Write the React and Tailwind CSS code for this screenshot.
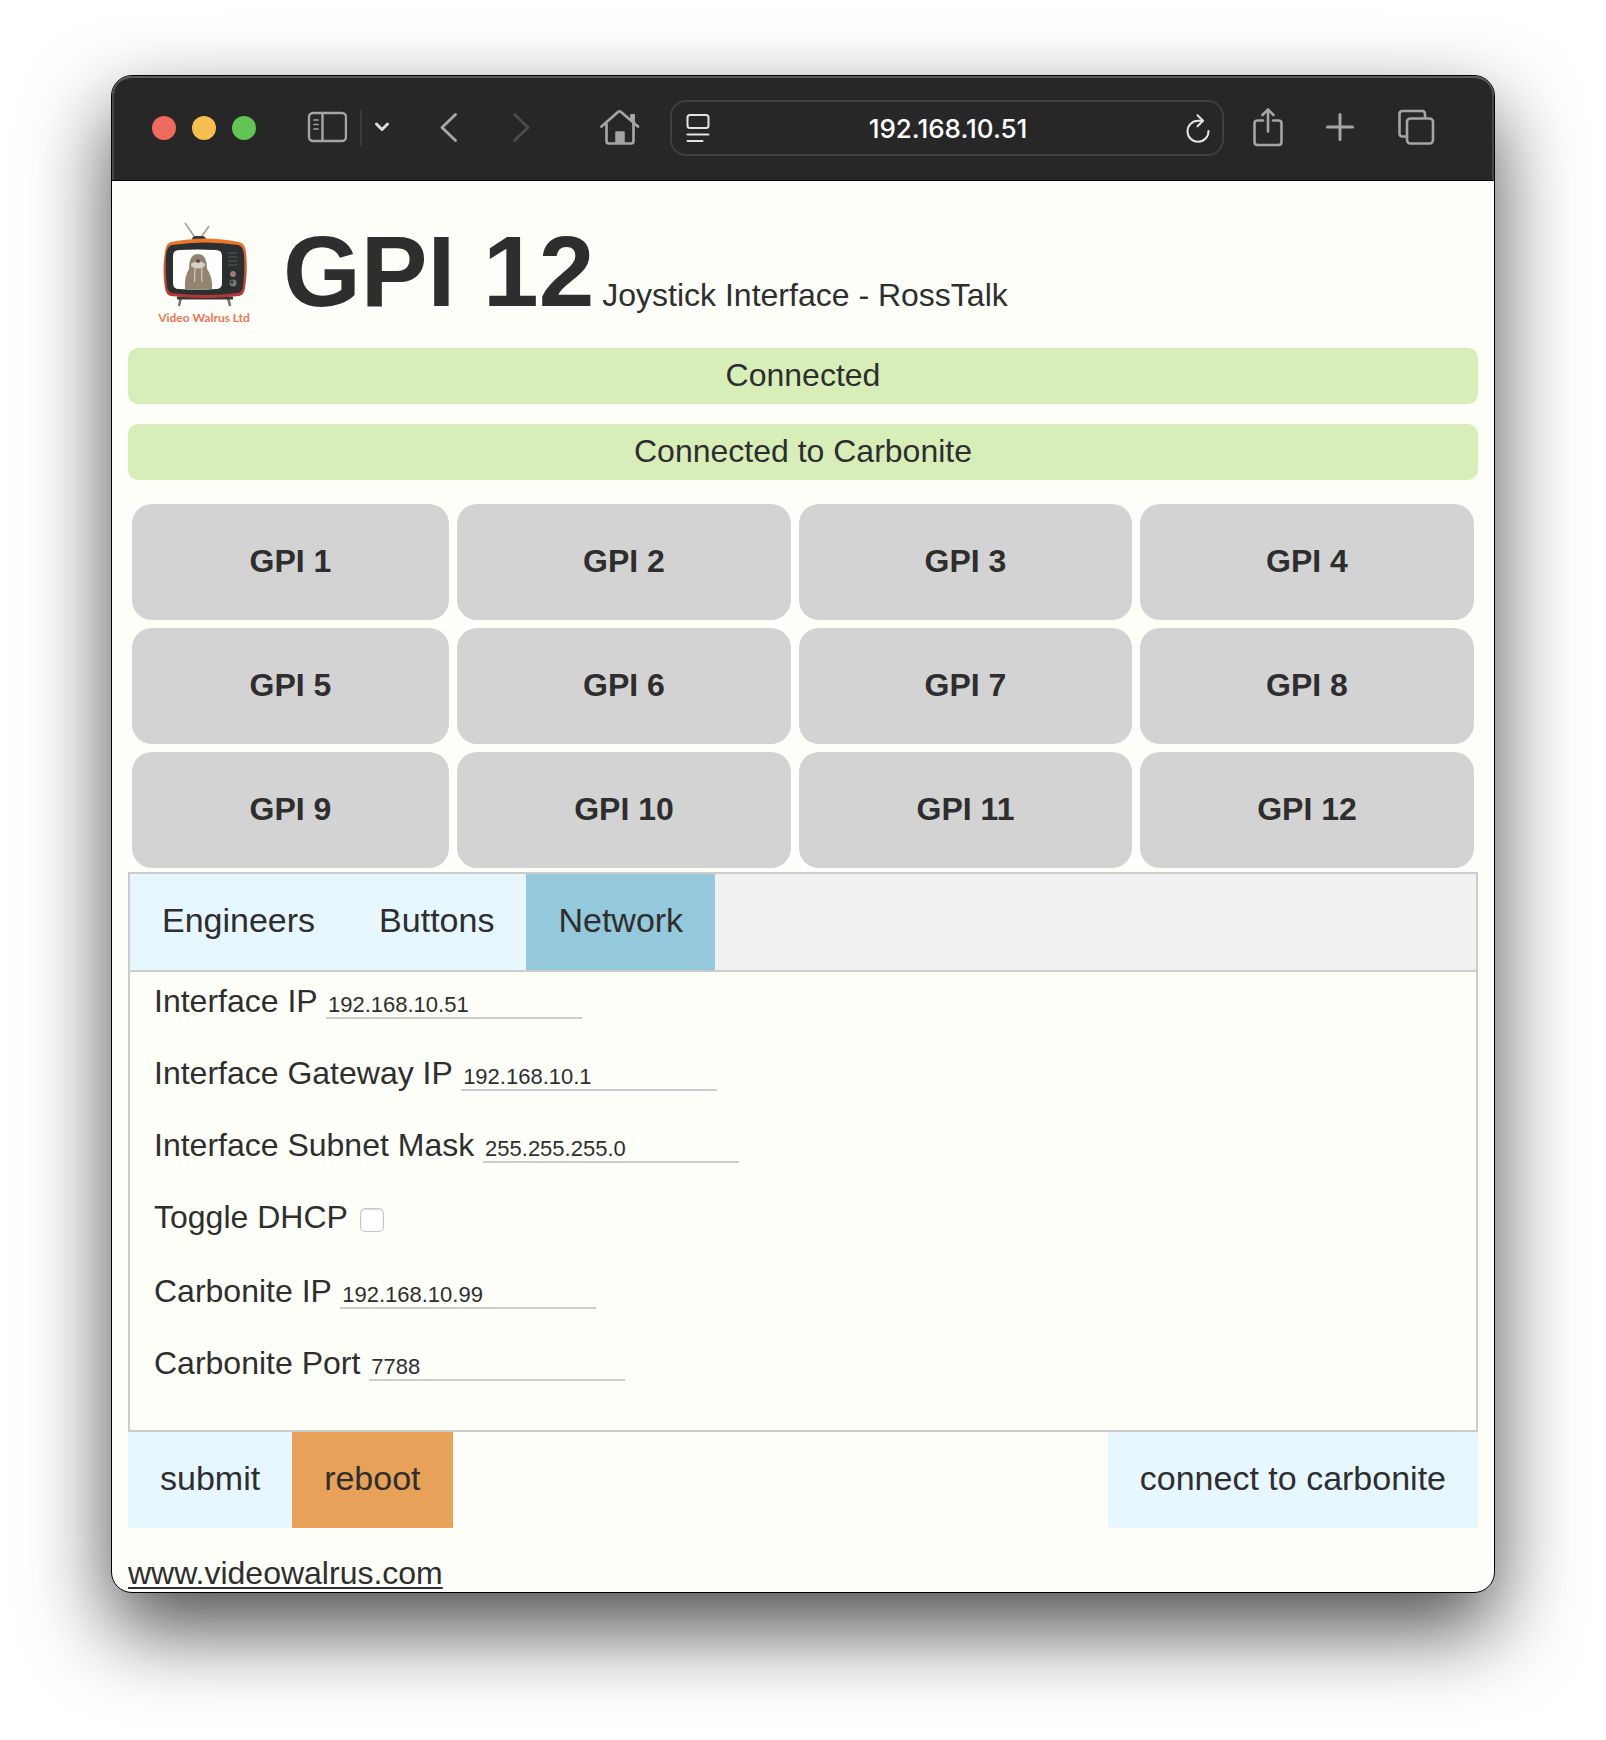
import React, { useState } from 'react';

const GPIS = Array.from({ length: 12 }, (_, i) => `GPI ${i + 1}`);
const TABS = ['Engineers', 'Buttons', 'Network'];

function Icon({ w, h, className = 'mb-0.5', children, stroke = 2 }) {
  return (
    <svg
      width={w}
      height={h}
      viewBox={`0 0 ${w} ${h}`}
      fill="none"
      stroke="currentColor"
      strokeWidth={stroke}
      strokeLinecap="round"
      strokeLinejoin="round"
      aria-hidden="true"
      className={`block shrink-0 ${className}`}
    >
      {children}
    </svg>
  );
}

function Toolbar() {
  return (
    <header className="flex h-[105px] items-center rounded-t-[20px] border-b border-black bg-[#272727] pr-[59px] pl-10 text-[#a5a5a5] shadow-[inset_0_2px_0_#5c5c5a,inset_2px_0_0_#484848,inset_-2px_0_0_#484848]">
      <div className="flex shrink-0 gap-4">
        <button aria-label="Close" className="size-6 rounded-full bg-[#ee6a5f]" />
        <button aria-label="Minimise" className="size-6 rounded-full bg-[#f5be4f]" />
        <button aria-label="Zoom" className="size-6 rounded-full bg-[#61c555]" />
      </div>
      <button aria-label="Sidebar" className="ml-[51px]">
        <Icon w={40} h={34} stroke={2.4}>
          <rect x="2" y="3" width="37" height="28" rx="4" />
          <path d="M15.500 3v28" />
          <path d="M7 10h4M7 14.500h4M7 19h4" strokeWidth="1.700" />
        </Icon>
      </button>
      <span className="ml-[13px] h-9 w-0.5 shrink-0 bg-[#3a3a3a]" />
      <button aria-label="Sidebar menu" className="ml-3 text-[#dcdcdc]">
        <Icon w={16} h={12} stroke={3}>
          <path d="M2.500 3l5.500 5.500L13.500 3" />
        </Icon>
      </button>
      <button aria-label="Back" className="ml-[49px]">
        <Icon w={20} h={32} stroke={3}>
          <path d="M16.500 3.500L3 16.500 16.500 29.500" />
        </Icon>
      </button>
      <button aria-label="Forward" className="ml-[52px] text-[#4b4b4b]">
        <Icon w={20} h={32} stroke={3}>
          <path d="M3.500 3.500L17 16.500 3.500 29.500" />
        </Icon>
      </button>
      <button aria-label="Home" className="ml-[69px]">
        <Icon w={40} h={38} stroke={2.7}>
          <path d="M1.500 18.500L18 4q1.500-1.200 3 0L38 18.500" />
          <path d="M6.500 16v17q0 2.500 2.500 2.500h22q2.500 0 2.500-2.500V16" />
          <path d="M31 6.500h3.500v9L31 12.500z" fill="currentColor" strokeWidth="1" />
          <path d="M16 24h8v11h-8z" fill="currentColor" strokeWidth="1.500" />
        </Icon>
      </button>
      <div className="ml-[30px] flex h-14 min-w-0 flex-1 items-center rounded-[16px] border-2 border-[#404040] px-3 text-white">
        <button aria-label="Reader" className="ml-0.5 text-[#e4e4e4]">
          <Icon w={24} h={30} className="">
            <rect x="1.500" y="2" width="21" height="13" rx="2.500" />
            <path d="M1.500 21.500h21M1.500 28h15" />
          </Icon>
        </button>
        <input
          aria-label="Address"
          defaultValue="192.168.10.51"
          className="min-w-0 flex-1 bg-transparent pt-0.5 text-center font-['Inter',sans-serif] text-[26px] leading-8 font-medium outline-none"
        />
        <button aria-label="Reload" className="text-[#e4e4e4]">
          <Icon w={24} h={30} className="">
            <path d="M17 7.800H12A10.500 10.500 0 1 0 22.500 18" />
            <path d="M11.500 2.300l5.500 5.500-5.500 5.500" />
          </Icon>
        </button>
      </div>
      <button aria-label="Share" className="ml-7">
        <Icon w={32} h={40} stroke={2.6}>
          <path d="M11 13.500H5.500q-3 0-3 3V35q0 3 3 3h21q3 0 3-3V16.500q0-3-3-3H21" />
          <path d="M16 24.500V3M10.500 8L16 2.500 21.500 8" />
        </Icon>
      </button>
      <button aria-label="New tab" className="ml-[42px]">
        <Icon w={28} h={28} stroke={3}>
          <path d="M14 1.500v25M1.500 14h25" />
        </Icon>
      </button>
      <button aria-label="Tab overview" className="ml-[43px]">
        <Icon w={38} h={38} stroke={2.6}>
          <path d="M9 28.500H5.500q-3 0-3-3V6q0-3 3-3H25q3 0 3 3v3.500" />
          <rect x="10" y="10.500" width="26" height="25" rx="3.500" />
        </Icon>
      </button>
    </header>
  );
}

function Logo() {
  return (
    <svg width="100" height="104" viewBox="0 0 100 104" role="img" aria-label="Video Walrus Ltd" className="block shrink-0">
      <defs>
        <linearGradient id="shell" x1="0" y1="0" x2="0" y2="1">
          <stop offset="0" stopColor="#ee7a2c" />
          <stop offset="0.500" stopColor="#c9553b" />
          <stop offset="1" stopColor="#b0343a" />
        </linearGradient>
      </defs>
      <path d="M29 2l9 13M53 5l-7 10" stroke="#9a9a98" strokeWidth="1.500" fill="none" />
      <path d="M36 19q0-4 4-4h6q4 0 4 4z" fill="#34393a" />
      <path d="M25 76l-2 9M72 76l2 9" stroke="#77706c" strokeWidth="2.500" />
      <path d="M21 77h56" stroke="#3c3536" strokeWidth="3" />
      <path d="M15 21Q50 14 83 21q6 1 7 10 2 18-1 36-1 7-6 8-34 4-68 0-5-1-6-8-3-18 0-36 1-9 6-10z" fill="url(#shell)" />
      <path d="M16 24q33-5 66 0 5 1 6 9 1 16-1 32-1 6-5 7-33 4-66 0-4-1-5-7-2-17-1-32 1-8 6-9z" fill="#2a2f30" />
      <path d="M23 29q18-1 37 0 6 0 6 6v27q0 6-6 6-19 1-37 0-6 0-6-6V35q0-6 6-6z" fill="#fff" />
      <path d="M29 68q-1-12 4-20 0-15 9-15t9 15q6 8 5 20z" fill="#94836f" />
      <ellipse cx="42" cy="44" rx="7" ry="3.500" fill="#d8d0c8" />
      <circle cx="42" cy="40" r="2" fill="#5b5048" />
      <path d="M39 46l-.500 15M45.500 46l.500 15" stroke="#cfc6bc" strokeWidth="1.300" />
      <path d="M72 32h9M72 36h9M72 40h9M72 44h9" stroke="#4c4c4b" strokeWidth="1.500" />
      <circle cx="77" cy="53" r="3" fill="#a07a6e" />
      <circle cx="77" cy="62" r="3.500" fill="#7b7975" />
      <circle cx="76" cy="61" r="1.500" fill="#2a2f30" />
      <text x="48" y="101" textAnchor="middle" fontSize="12" fill="#ee7355" fontFamily="Lato, sans-serif" fontWeight="700">
        Video Walrus Ltd
      </text>
    </svg>
  );
}

function Field({ id, label, value }) {
  return (
    <div className="h-[72px]">
      <label htmlFor={id}>{label}</label>{' '}
      <input
        id={id}
        defaultValue={value}
        className="h-[25px] w-64 border-b-2 border-[#cccccc] bg-transparent px-0.5 text-[22px] leading-none outline-none"
      />
    </div>
  );
}

export default function App() {
  const [tab, setTab] = useState('Network');
  return (
    <div className="overflow-hidden bg-white px-[111px] pt-[75px] pb-[147px] font-['Liberation_Sans',Arial,sans-serif] text-[32px] leading-9 text-[#2e2e2e]">
      <div className="rounded-[21px] border border-black bg-[#fefff9] shadow-[0_36px_84px_rgba(0,0,0,0.7)]">
        <Toolbar />
        <main className="px-4">
          <div className="flex items-baseline pt-[30px] pl-7">
            <div className="self-start pt-2.5 pr-[27px]">
              <Logo />
            </div>
            <h1 className="text-[100px] leading-[120px] font-bold">GPI 12</h1>
            <p className="ml-2">Joystick Interface - RossTalk</p>
          </div>
          <p className="mt-[17px] rounded-[10px] bg-[#d7eeb9] pt-[9px] pb-[11px] text-center">Connected</p>
          <p className="mt-5 rounded-[10px] bg-[#d7eeb9] pt-[9px] pb-[11px] text-center">Connected to Carbonite</p>
          <div className="mt-6 grid grid-cols-[317fr_334fr_333fr_334fr] gap-2 px-1">
            {GPIS.map((name) => (
              <button key={name} className="h-[116px] rounded-[20px] bg-[#d3d3d3] pb-0.5 font-bold">
                {name}
              </button>
            ))}
          </div>
          <div role="tablist" className="mt-1 flex border-2 border-[#cccccc] bg-[#f1f1f1]">
            {TABS.map((name) => (
              <button
                key={name}
                role="tab"
                aria-selected={tab === name}
                onClick={() => setTab(name)}
                className={`h-24 px-8 pb-1 text-[34px] ${tab === name ? 'bg-[#94c8db]' : 'bg-[#e6f7ff]'}`}
              >
                {name}
              </button>
            ))}
          </div>
          <form className="border-2 border-t-0 border-[#cccccc] px-6 pt-[11px] pb-[13px]">
            <Field id="ip" label="Interface IP" value="192.168.10.51" />
            <Field id="gateway" label="Interface Gateway IP" value="192.168.10.1" />
            <Field id="mask" label="Interface Subnet Mask" value="255.255.255.0" />
            <div className="flex h-[74px] items-start">
              <label htmlFor="dhcp">Toggle DHCP</label>
              <input
                id="dhcp"
                type="checkbox"
                className="mt-[9px] ml-3 size-6 appearance-none rounded-[5px] border border-[#c6c6c6] bg-white shadow-[inset_0_1px_2px_rgba(0,0,0,0.15)]"
              />
            </div>
            <Field id="carbonite-ip" label="Carbonite IP" value="192.168.10.99" />
            <Field id="carbonite-port" label="Carbonite Port" value="7788" />
          </form>
          <div className="flex text-[34px]">
            <button className="h-24 bg-[#e6f7ff] px-8 pb-1">submit</button>
            <button className="h-24 bg-[#e8a158] px-8 pb-1">reboot</button>
            <button className="ml-auto h-24 bg-[#e6f7ff] px-8 pb-1">connect to carbonite</button>
          </div>
          <p className="pt-[27px] pb-px">
            <a href="http://www.videowalrus.com" className="underline decoration-2 underline-offset-[3px]">
              www.videowalrus.com
            </a>
          </p>
        </main>
      </div>
    </div>
  );
}
